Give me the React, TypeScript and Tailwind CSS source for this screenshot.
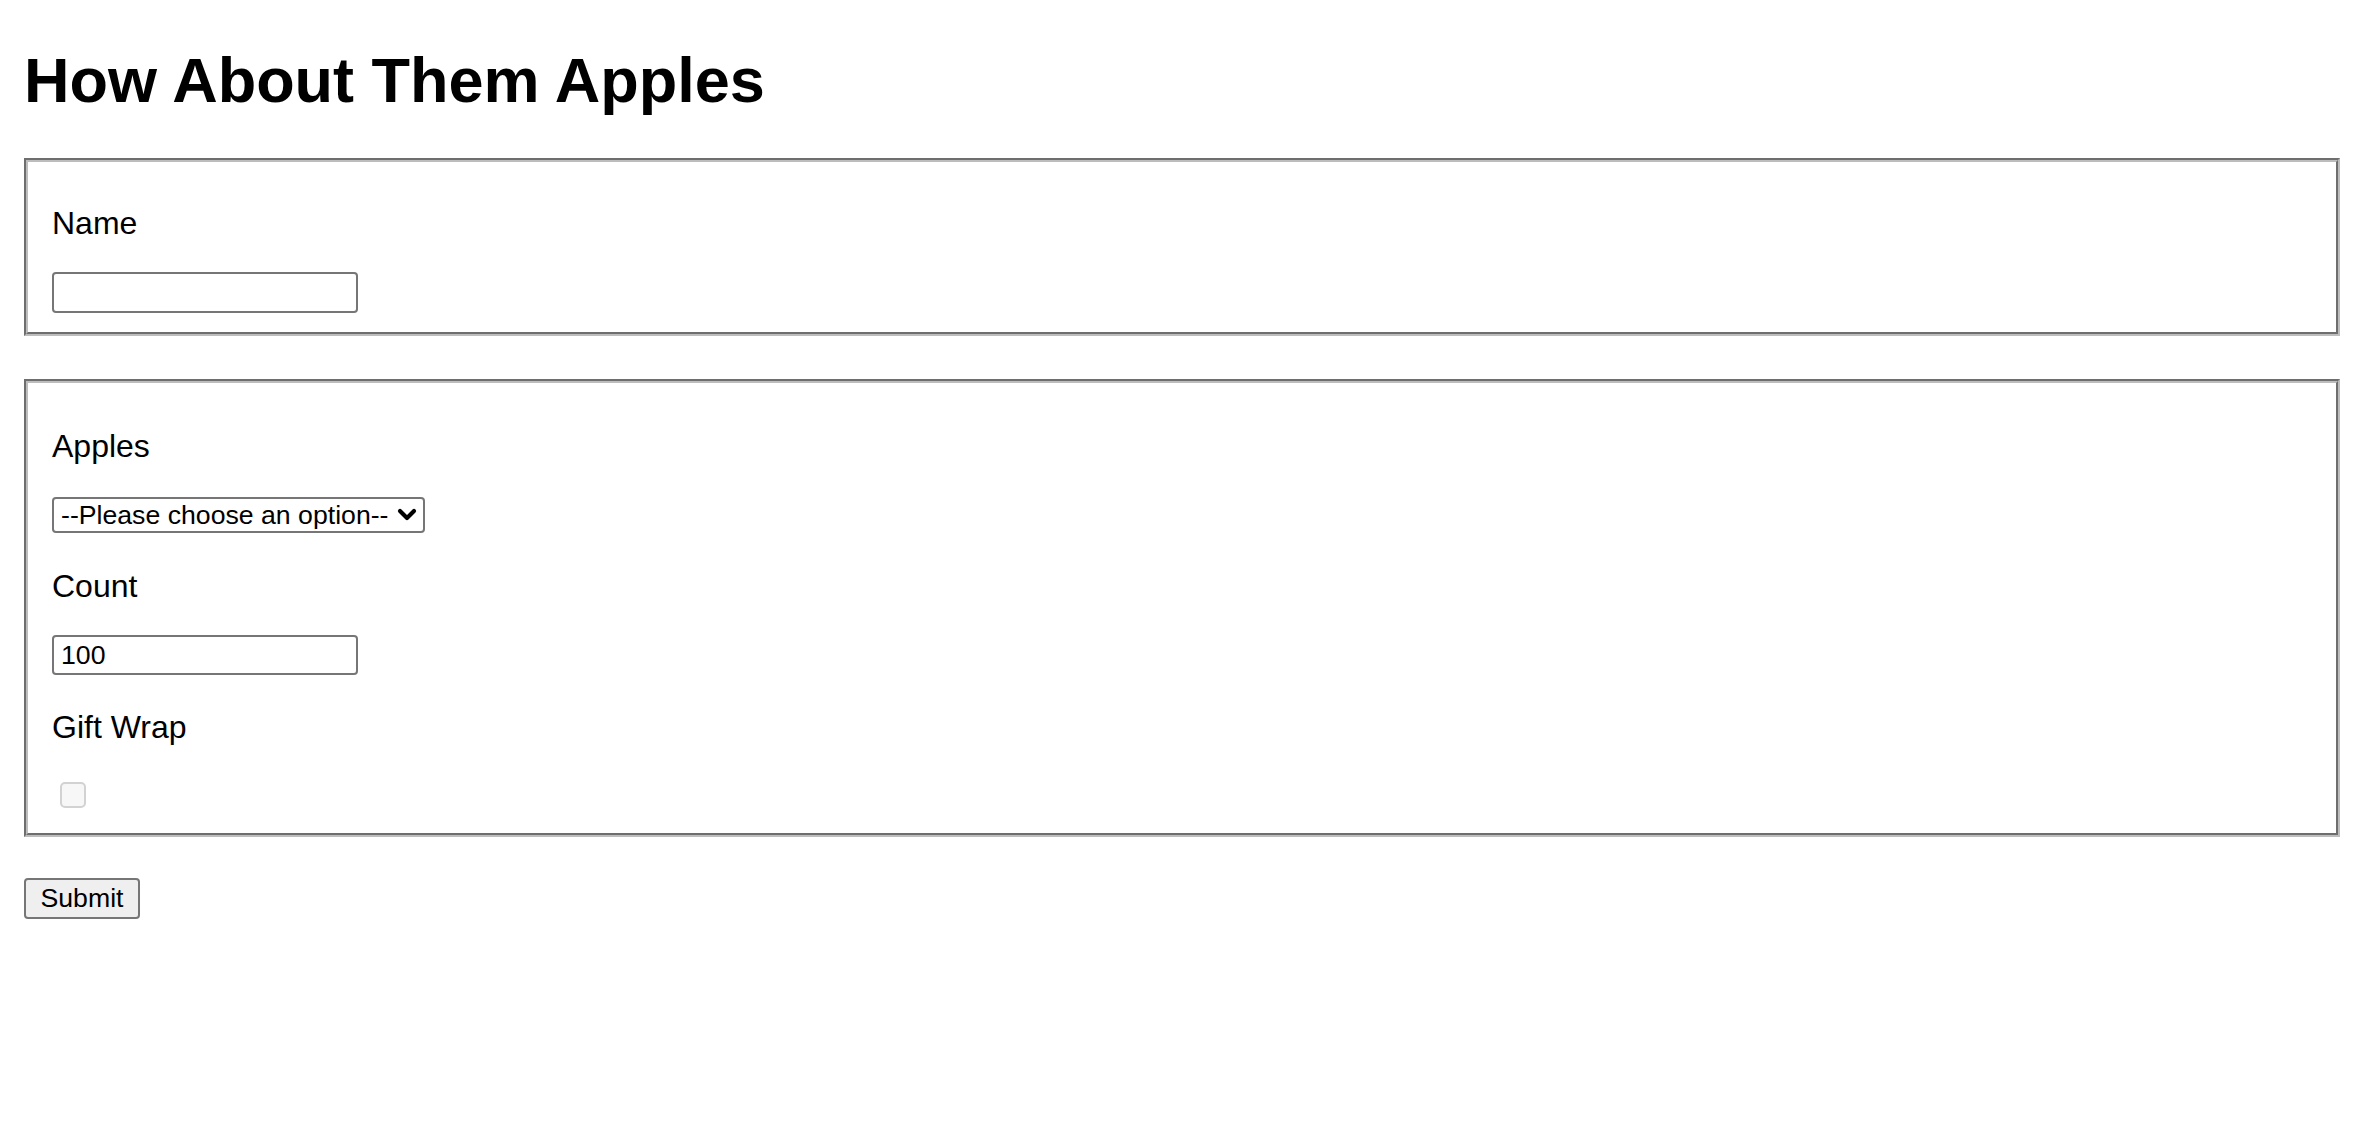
import React from "react";

function Groove({ children, className }: { children: React.ReactNode; className?: string }) {
  return (
    <div className={"border-2 border-t-[#6e6e6e] border-l-[#6e6e6e] border-b-[#bdbdbd] border-r-[#bdbdbd] " + (className ?? "")}>
      <div className="border-2 border-t-[#bdbdbd] border-l-[#bdbdbd] border-b-[#6e6e6e] border-r-[#6e6e6e] px-[24px]">
        {children}
      </div>
    </div>
  );
}

function Label({ children, className }: { children: React.ReactNode; className?: string }) {
  return <div className={"text-[32px] leading-[36px] " + (className ?? "")}>{children}</div>;
}

export default function App() {
  return (
    <div className="min-h-screen bg-white text-black pl-[24px] pr-[26px] pt-[44px] pb-10 font-['Liberation_Sans',Arial,sans-serif]">
      <h1 className="text-[63px] font-bold leading-[72px] mb-[42px]">How About Them Apples</h1>

      <Groove>
        <Label className="mt-[43px]">Name</Label>
        <div className="mt-[31px] pb-[19px]">
          <div className="h-[41px] w-[306px] border-2 border-[#767676] rounded-[4px] bg-white"></div>
        </div>
      </Groove>

      <Groove className="mt-[43px]">
        <Label className="mt-[45px]">Apples</Label>
        <div className="mt-[33px] h-[36px] w-[373px] border-2 border-[#767676] rounded-[4px] bg-white flex items-center pl-[7px] pr-[6px]">
          <span className="text-[26.67px] leading-none flex-1 whitespace-nowrap">--Please choose an option--</span>
          <svg width="20" height="14" viewBox="0 0 20 14" className="ml-[2px]">
            <polyline points="3,3 10,10 17,3" fill="none" stroke="#000" strokeWidth="4.2" strokeLinecap="round" strokeLinejoin="round" />
          </svg>
        </div>
        <Label className="mt-[35px]">Count</Label>
        <div className="mt-[31px] h-[40px] w-[306px] border-2 border-[#767676] rounded-[4px] bg-white flex items-center pl-[7px]">
          <span className="text-[26.67px] leading-none">100</span>
        </div>
        <Label className="mt-[34px]">Gift Wrap</Label>
        <div className="mt-[37px] pb-[25px] pl-[8px]">
          <div className="h-[26px] w-[26px] rounded-[5px] border-2 border-[#d2d2d2] bg-[#f7f7f7]"></div>
        </div>
      </Groove>

      <div className="mt-[41px]">
        <div className="inline-flex h-[41px] w-[116px] items-center justify-center border-2 border-[#767676] rounded-[4px] bg-[#efefef] text-[26.67px] leading-none">
          Submit
        </div>
      </div>
    </div>
  );
}
